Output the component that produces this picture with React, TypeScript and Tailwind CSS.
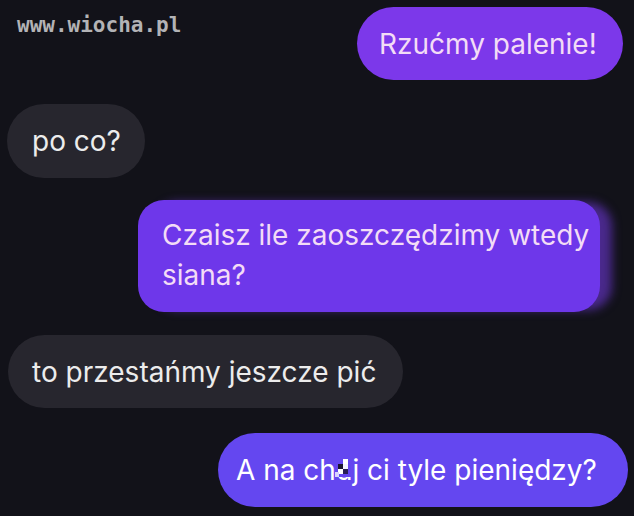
const Censor = () => (
  <span className="relative inline-block">
    u
    <svg
      className="absolute left-[-1px] top-[9px]"
      width="16"
      height="18"
      viewBox="0 0 16 18"
    >
      <rect x="0" y="0" width="16" height="18" fill="#6447f0" />
      <rect x="8" y="0" width="5" height="5" fill="#ffffff" />
      <rect x="3" y="5" width="5" height="5" fill="#1a1530" />
      <rect x="8" y="5" width="5" height="5" fill="#f4f4ff" />
      <rect x="3" y="10" width="5" height="5" fill="#ffffff" />
      <rect x="8" y="10" width="5" height="5" fill="#2a1f55" />
      <rect x="0" y="13" width="4" height="5" fill="#d9d2ff" />
    </svg>
  </span>
);

const Bubble = ({
  mine,
  className,
  children,
}: {
  mine?: boolean;
  className: string;
  children: React.ReactNode;
}) => (
  <div
    className={
      'whitespace-nowrap text-[28px] leading-[40px] ' +
      (mine ? 'self-end text-[#f3dcf6] ' : 'self-start bg-[#27262e] text-[#ececec] ') +
      className
    }
  >
    {children}
  </div>
);

export default function App() {
  return (
    <div
      className="relative flex h-[516px] w-[634px] flex-col overflow-hidden bg-[#121219] pt-[7px]"
      style={{ fontFamily: 'Inter, "Liberation Sans", sans-serif' }}
    >
      <span
        className="absolute left-[17px] top-[10px] text-[21px] font-bold text-[#b3b3b6]"
        style={{ fontFamily: '"DejaVu Sans Mono", monospace' }}
      >
        www.wiocha.pl
      </span>

      <Bubble mine className="mr-[11px] flex h-[73px] w-[266px] items-center rounded-full bg-[#7c38ea] pl-[22px]">
        Rzućmy palenie!
      </Bubble>

      <Bubble className="ml-[7px] mt-[24px] flex h-[74px] w-[138px] items-center rounded-full pl-[25px]">
        po co?
      </Bubble>

      <Bubble
        mine
        className="mr-[34px] mt-[22px] h-[112px] w-[462px] rounded-[26px] bg-[#6e37ea] pl-[24px] pt-[15px] shadow-[14px_0_10px_-2px_rgba(120,60,235,0.55)]"
      >
        Czaisz ile zaoszczędzimy wtedy
        <br />
        siana?
      </Bubble>

      <Bubble className="ml-[8px] mt-[23px] flex h-[73px] w-[395px] items-center rounded-full pl-[24px]">
        to przestańmy jeszcze pić
      </Bubble>

      <Bubble
        mine
        className="mr-[6px] mt-[25px] flex h-[74px] w-[410px] items-center rounded-full bg-[#6447f0] pl-[18px] text-white"
      >
        <span>
          A na ch<Censor />j ci tyle pieniędzy?
        </span>
      </Bubble>
    </div>
  );
}
